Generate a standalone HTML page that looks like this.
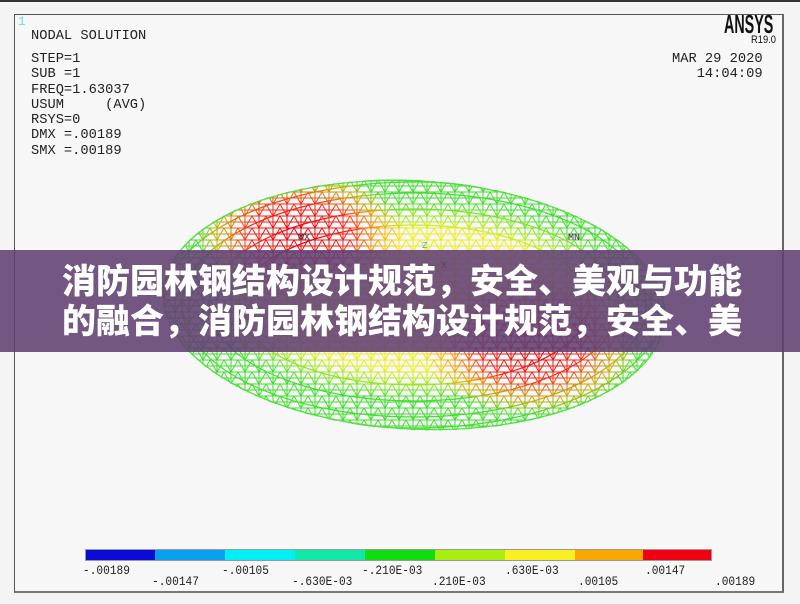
<!DOCTYPE html>
<html><head><meta charset="utf-8"><style>
html,body{margin:0;padding:0}
body{width:800px;height:604px;background:#f4f4f4;position:relative;overflow:hidden;font-family:"Liberation Mono",monospace}
.frame{position:absolute;left:14px;top:14px;width:767px;height:576px;border:1px solid #555;border-right:2px solid #666;border-bottom:2px solid #777;background:#f7f7f7}
.t{position:absolute;font-family:"Liberation Mono",monospace;font-size:14px;color:#222;white-space:pre;line-height:15.3px;transform:scaleX(0.98);transform-origin:left top}
.banner{position:absolute;left:0;top:250px;width:800px;height:102px;background:rgba(98,64,114,0.88)}
.bt{position:absolute;left:62px;font-family:"Liberation Sans","Noto Sans CJK SC",sans-serif;font-weight:900;font-size:34px;color:#fff;white-space:nowrap;line-height:1}
.lab{position:absolute;font-family:"Liberation Mono",monospace;font-size:13px;color:#222;white-space:pre;transform:scaleX(0.86);transform-origin:left top}
</style></head><body>
<div style="position:absolute;left:0;top:0;width:800px;height:2px;background:#333"></div>
<div class="frame"></div>
<div class="t" style="left:18px;top:14px;color:#6dd;font-size:13px">1</div>
<div class="t" style="left:31px;top:29px">NODAL SOLUTION</div>
<div class="t" style="left:31px;top:52px">STEP=1
SUB =1
FREQ=1.63037
USUM     (AVG)
RSYS=0
DMX =.00189
SMX =.00189</div>
<div class="t" style="left:672px;top:52px">MAR 29 2020
   14:04:09</div>
<div style="position:absolute;left:724px;top:9px;font-family:'Liberation Sans',sans-serif;font-weight:bold;font-size:26px;line-height:30px;color:#111;transform:scaleX(0.55);transform-origin:left top">ANSYS</div>
<div style="position:absolute;left:751px;top:34px;font-family:'Liberation Sans',sans-serif;font-size:11px;color:#111;transform:scaleX(0.85);transform-origin:left top">R19.0</div>

<svg width="800" height="604" style="position:absolute;left:0;top:0">
<defs>
<radialGradient id="y" cx="0.5" cy="0.5" r="0.5"><stop offset="0" stop-color="#ffe000"/><stop offset="0.7" stop-color="#eeee20"/><stop offset="1" stop-color="#eeee20" stop-opacity="0"/></radialGradient>
<radialGradient id="r" cx="0.5" cy="0.5" r="0.5"><stop offset="0" stop-color="#e00010"/><stop offset="0.5" stop-color="#f03020"/><stop offset="0.8" stop-color="#f8a000" stop-opacity="0.7"/><stop offset="1" stop-color="#f8a000" stop-opacity="0"/></radialGradient>
<pattern id="mesh" width="14" height="12" patternUnits="userSpaceOnUse"><path d="M0 0L7 12L14 0M0 12H14M0 0H14M7 0V12M0 6H14" stroke="#fff" stroke-width="1" fill="none"/></pattern>
<mask id="m"><rect x="0" y="0" width="800" height="604" fill="url(#mesh)"/>
<g fill="none" stroke="#fff" stroke-width="1.2">
<ellipse cx="414" cy="305" rx="250" ry="123"/><ellipse cx="414" cy="305" rx="232" ry="112"/><ellipse cx="414" cy="305" rx="205" ry="96"/><ellipse cx="414" cy="305" rx="175" ry="80"/></g></mask>
<clipPath id="c"><ellipse cx="414" cy="305" rx="252" ry="125" transform="rotate(3 414 305)"/></clipPath>
</defs>
<g clip-path="url(#c)" mask="url(#m)">
<rect x="150" y="170" width="530" height="270" fill="#44dd33"/>
<ellipse cx="420" cy="300" rx="210" ry="100" fill="url(#y)"/>
<ellipse cx="300" cy="235" rx="105" ry="65" fill="url(#r)"/>
<ellipse cx="530" cy="345" rx="110" ry="70" fill="url(#r)"/>
</g>
<ellipse cx="414" cy="305" rx="251" ry="124" transform="rotate(3 414 305)" fill="none" stroke="#55dd44" stroke-width="1.3"/>
<text x="298" y="240" font-family="Liberation Mono" font-size="10" fill="#333">MX</text>
<text x="568" y="240" font-family="Liberation Mono" font-size="10" fill="#333">MN</text>
<text x="422" y="248" font-family="Liberation Mono" font-size="9" fill="#3af">Z</text>
<text x="441" y="268" font-family="Liberation Mono" font-size="10" fill="#333">X</text>
<g>
<rect x="85" y="549" width="627" height="12" fill="#999"/>
<rect x="86" y="550" width="69" height="10" fill="#0b0bd6"/>
<rect x="155" y="550" width="70" height="10" fill="#0aa0f0"/>
<rect x="225" y="550" width="70" height="10" fill="#00f0f8"/>
<rect x="295" y="550" width="70" height="10" fill="#10e8a8"/>
<rect x="365" y="550" width="70" height="10" fill="#10dd10"/>
<rect x="435" y="550" width="70" height="10" fill="#a8ee10"/>
<rect x="505" y="550" width="70" height="10" fill="#f8f020"/>
<rect x="575" y="550" width="68" height="10" fill="#f8a800"/>
<rect x="643" y="550" width="68" height="10" fill="#f00010"/>
</g>
</svg>
<div class="lab" style="left:83px;top:563px">-.00189</div>
<div class="lab" style="left:152px;top:574px">-.00147</div>
<div class="lab" style="left:222px;top:563px">-.00105</div>
<div class="lab" style="left:292px;top:574px">-.630E-03</div>
<div class="lab" style="left:362px;top:563px">-.210E-03</div>
<div class="lab" style="left:432px;top:574px">.210E-03</div>
<div class="lab" style="left:505px;top:563px">.630E-03</div>
<div class="lab" style="left:578px;top:574px">.00105</div>
<div class="lab" style="left:645px;top:563px">.00147</div>
<div class="lab" style="left:715px;top:574px">.00189</div>

<div class="banner"></div>
<div class="bt" style="top:265px">消防园林钢结构设计规范，安全、美观与功能</div>
<div class="bt" style="top:305px">的融合，消防园林钢结构设计规范，安全、美</div>
</body></html>
